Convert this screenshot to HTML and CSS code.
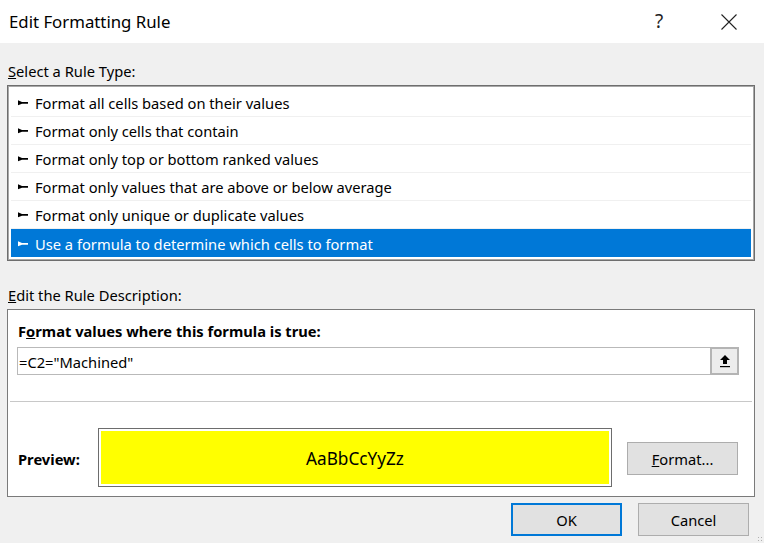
FILE: index.html
```html
<!DOCTYPE html>
<html>
<head>
<meta charset="utf-8">
<link rel="stylesheet" href="styles.css">
</head>
<body>
<div class="dialog">
  <div class="titlebar">
    <div class="title">Edit Formatting Rule</div>
    <div class="tb-btn help">?</div>
    <div class="tb-btn close">
      <svg width="16" height="16" viewBox="0 0 16 16"><path d="M0.5 0.5 L15.5 15.5 M15.5 0.5 L0.5 15.5" stroke="#222" stroke-width="1.1" fill="none"/></svg>
    </div>
  </div>
  <div class="body">
    <div class="label first"><u>S</u>elect a Rule Type:</div>
    <div class="list">
      <div class="row"><svg class="ico" width="10" height="6" viewBox="0 0 10 6"><polygon points="0,0.3 4,1.9 10,1.9 10,3.7 4,3.7 0,5.3"/></svg><span>Format all cells based on their values</span></div>
      <div class="row"><svg class="ico" width="10" height="6" viewBox="0 0 10 6"><polygon points="0,0.3 4,1.9 10,1.9 10,3.7 4,3.7 0,5.3"/></svg><span>Format only cells that contain</span></div>
      <div class="row"><svg class="ico" width="10" height="6" viewBox="0 0 10 6"><polygon points="0,0.3 4,1.9 10,1.9 10,3.7 4,3.7 0,5.3"/></svg><span>Format only top or bottom ranked values</span></div>
      <div class="row"><svg class="ico" width="10" height="6" viewBox="0 0 10 6"><polygon points="0,0.3 4,1.9 10,1.9 10,3.7 4,3.7 0,5.3"/></svg><span>Format only values that are above or below average</span></div>
      <div class="row"><svg class="ico" width="10" height="6" viewBox="0 0 10 6"><polygon points="0,0.3 4,1.9 10,1.9 10,3.7 4,3.7 0,5.3"/></svg><span>Format only unique or duplicate values</span></div>
      <div class="row selected"><svg class="ico" width="10" height="6" viewBox="0 0 10 6"><polygon points="0,0.3 4,1.9 10,1.9 10,3.7 4,3.7 0,5.3"/></svg><span>Use a formula to determine which cells to format</span></div>
    </div>
    <div class="label second"><u>E</u>dit the Rule Description:</div>
    <div class="desc">
      <div class="bold-label">F<u>o</u>rmat values where this formula is true:</div>
      <div class="formula">
        <div class="formula-text">=C2="Machined"</div>
        <div class="collapse-btn">
          <svg width="12" height="14" viewBox="0 0 12 14"><polygon points="6,1 11,6 8,6 8,10 4,10 4,6 1,6" fill="#000"/><rect x="1" y="12" width="10" height="1.2" fill="#000"/></svg>
        </div>
      </div>
      <div class="sep"></div>
      <div class="preview-row">
        <div class="bold-label preview-label">Preview:</div>
        <div class="preview-box"><div class="preview-fill">AaBbCcYyZz</div></div>
        <div class="btn format-btn"><u>F</u>ormat...</div>
      </div>
    </div>
    <div class="buttons">
      <div class="btn ok">OK</div>
      <div class="btn cancel">Cancel</div>
    </div>
  </div>
  <div class="grip"></div>
</div>
</body>
</html>
```

FILE: styles.css
```css
html, body {
  margin: 0;
  padding: 0;
}
body {
  width: 764px;
  height: 543px;
  overflow: hidden;
  background: #f0f0f0;
  font-family: "Noto Sans", "Open Sans", sans-serif;
  font-size: 14.7px;
  color: #000;
}
.dialog {
  position: relative;
  width: 764px;
  height: 543px;
}
.titlebar {
  height: 43px;
  background: #fff;
  display: flex;
  align-items: center;
}
.title {
  padding-left: 9px;
  font-size: 16.8px;
  flex: 1;
  color: #000;
}
.tb-btn {
  display: flex;
  align-items: center;
  justify-content: center;
  height: 43px;
}
.help {
  width: 20px;
  font-size: 19px;
  color: #222;
  margin-right: 52px;
  margin-top: -2px;
}
.close {
  width: 16px;
  margin-right: 27px;
}
.body {
  padding: 0 9px 0 7px;
}
.label {
  height: 20px;
  line-height: 20px;
  padding-left: 1px;
}
.label.first {
  margin-top: 18px;
  margin-bottom: 4px;
}
.label.second {
  margin-top: 24px;
  margin-bottom: 4px;
}
.list {
  border: 1px solid #6e6e6e;
  box-shadow: inset 0 0 0 1px #a8a8a8;
  background: #fff;
  padding: 3px;
}
.row {
  height: 28px;
  box-sizing: border-box;
  border-bottom: 1px solid #f0f0f0;
  display: flex;
  align-items: center;
  padding-left: 7px;
  padding-top: 1px;
  white-space: nowrap;
}
.row:last-child {
  border-bottom: none;
}
.row .ico {
  fill: #000;
  margin-right: 7px;
  flex: none;
}
.row.selected {
  background: #0078d7;
  color: #fff;
}
.row.selected .ico {
  fill: #fff;
}
.desc {
  border: 1px solid #7a7a7a;
  background: #fff;
  height: 188px;
  box-sizing: border-box;
  padding: 11px 15px 0 10px;
}
.bold-label {
  font-weight: bold;
  height: 20px;
  line-height: 20px;
}
.formula {
  margin-top: 6px;
  margin-left: -1px;
  height: 28px;
  box-sizing: border-box;
  border: 1px solid #b9b9b9;
  display: flex;
  align-items: center;
}
.formula-text {
  flex: 1;
  padding-left: 1px;
  padding-top: 1px;
}
.collapse-btn {
  width: 29px;
  height: 28px;
  margin-right: -1px;
  box-sizing: border-box;
  border: 2px solid #b4b4b4;
  background: #ececec;
  display: flex;
  align-items: center;
  justify-content: center;
}
.sep {
  height: 1px;
  background: #c8c8c8;
  margin: 26px -13px 0 -8px;
}
.preview-row {
  margin-top: 26px;
  display: flex;
  align-items: center;
}
.preview-label {
  width: 80px;
  margin-top: 3px;
}
.preview-box {
  width: 514px;
  height: 59px;
  box-sizing: border-box;
  border: 1px solid #6d6d6d;
  padding: 2px;
  background: #fff;
}
.preview-fill {
  height: 100%;
  background: #ffff00;
  display: flex;
  align-items: center;
  justify-content: center;
  font-size: 17.2px;
  padding-top: 1px;
  box-sizing: border-box;
}
.btn {
  box-sizing: border-box;
  width: 111px;
  height: 33px;
  background: #e1e1e1;
  border: 1px solid #adadad;
  display: flex;
  align-items: center;
  justify-content: center;
  padding-top: 1px;
}
.format-btn {
  margin-left: 15px;
  margin-top: 1px;
}
.buttons {
  display: flex;
  justify-content: flex-end;
  gap: 16px;
  margin-top: 6px;
  margin-right: 6px;
}
.btn.ok {
  border: 2px solid #0078d7;
}
.grip {
  position: absolute;
  right: 1px;
  bottom: 1px;
  width: 6px;
  height: 6px;
  background:
    radial-gradient(circle, #b0b0b0 0.8px, transparent 1px) 0 0 / 3px 3px;
}
```
